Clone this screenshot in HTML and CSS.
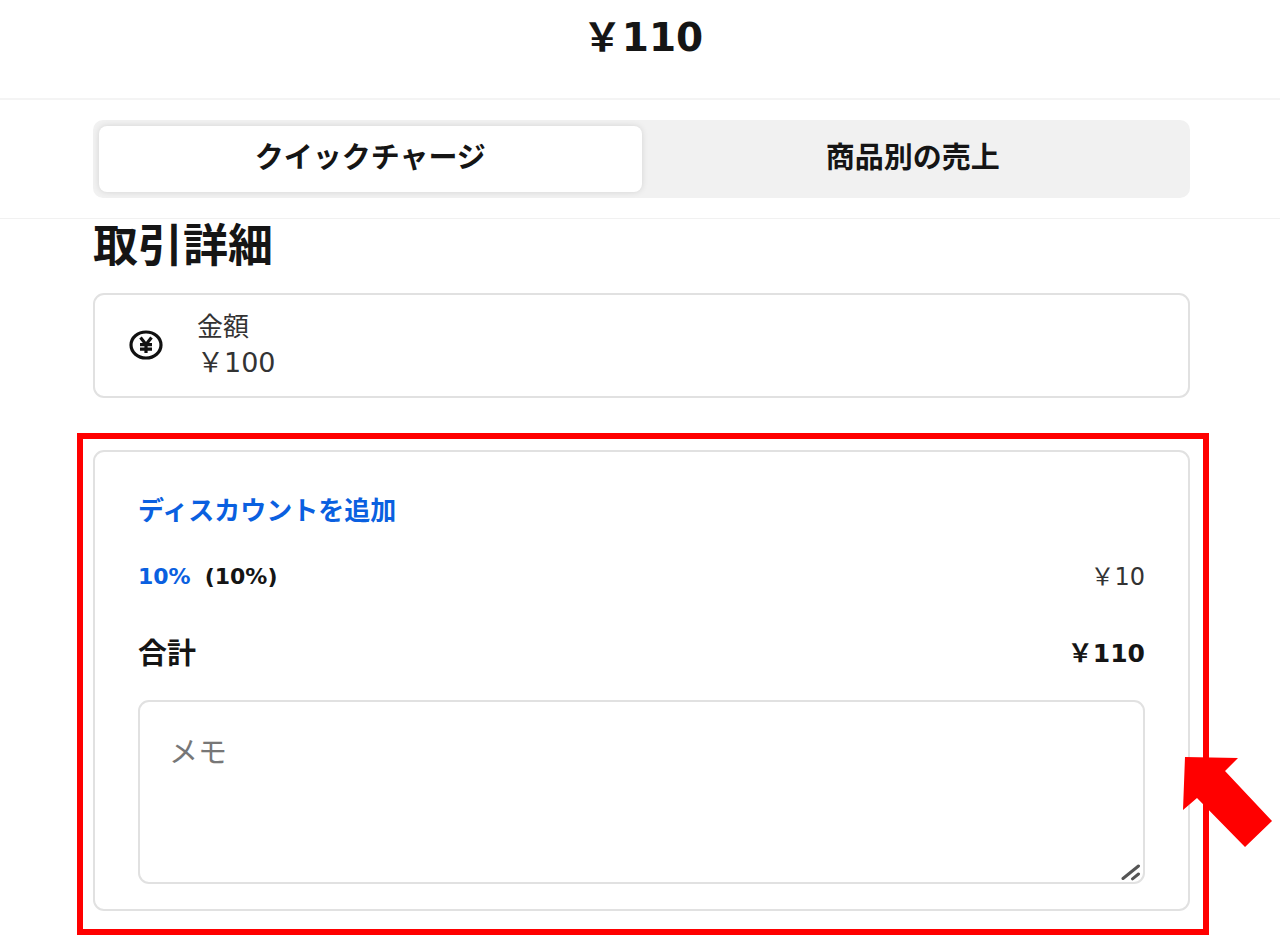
FILE: index.html
```
<!DOCTYPE html>
<html lang="ja">
  <head>
    <meta charset="UTF-8" />
    <meta name="viewport" content="width=device-width, initial-scale=1.0" />
    <title>クイックチャージ</title>

    <link rel="stylesheet" href="styles.css">
  </head>
  <body>
    <header class="charge-header">
      <h1>￥110</h1>
    </header>

    <nav class="tab-bar">
      <div class="tabs">
        <button type="button" class="tab active">クイックチャージ</button>
        <button type="button" class="tab">商品別の売上</button>
      </div>
    </nav>

    <main class="content">
      <h2>取引詳細</h2>

      <div class="card amount-card">
        <svg class="yen-icon" width="34" height="30" viewBox="0 0 34 30">
          <ellipse cx="17" cy="15" rx="15" ry="13" fill="none" stroke="#111" stroke-width="3.2" />
          <path
            d="M11.5 7.5L17 14.5L22.5 7.5M17 13V23M11 14.6H23M11 19.2H23"
            fill="none"
            stroke="#111"
            stroke-width="3.2"
          />
        </svg>
        <div class="amount-text">
          <div>金額</div>
          <div class="amount-value">￥100</div>
        </div>
      </div>

      <section class="highlight">
        <div class="card summary-card">
          <a class="add-discount" href="#">ディスカウントを追加</a>

          <div class="row discount-row">
            <div class="discount-name"><a href="#">10%</a><span>(10%)</span></div>
            <span class="discount-value">￥10</span>
          </div>

          <div class="row total-row">
            <span>合計</span>
            <span class="total-value">￥110</span>
          </div>

          <div class="memo">
            <textarea placeholder="メモ" aria-label="メモ"></textarea>
            <svg class="grip" width="20" height="18" viewBox="0 0 20 18">
              <path
                d="M2 15.5L17.5 3M11.5 15.8L17.5 11"
                fill="none"
                stroke="#555"
                stroke-width="3"
                stroke-linecap="round"
              />
            </svg>
          </div>
        </div>

        <svg class="arrow" width="90" height="92" viewBox="0 0 90 92">
          <polygon points="2,1 55,2 42,15 89,65 62,91 14,42 0,54" fill="#f00" />
        </svg>
      </section>
    </main>
  </body>
</html>
```
FILE: styles.css
```
* {
  box-sizing: border-box;
}

body {
  font-family: "DejaVu Sans", "Noto Sans CJK JP", sans-serif;
  margin: 0;
  background-color: #fff;
  color: #151515;
}

h1,
h2 {
  margin: 0;
  line-height: 52px;
}

a {
  color: #0a60e0;
  font-weight: bold;
  text-decoration: none;
}

/* Header */
.charge-header {
  padding: 12px 0 34px 6px;
  border-bottom: 2px solid #f4f4f4;
  text-align: center;
}

.charge-header h1 {
  font-size: 39px;
}

/* Tabs */
.tab-bar {
  padding: 20px 90px 20px 93px;
  border-bottom: 1px solid #f1f1f1;
}

.tabs {
  display: flex;
  padding: 6px;
  background-color: #f1f1f1;
  border-radius: 10px;
}

.tab {
  flex: 1;
  padding: 13px 0 15px;
  border: none;
  border-radius: 8px;
  background: none;
  color: inherit;
  font-family: inherit;
  font-size: 29px;
  font-weight: bold;
  line-height: 38px;
  cursor: pointer;
}

.tab.active {
  background-color: #fff;
  box-shadow: 0 0 6px rgba(0, 0, 0, 0.12);
}

/* Content */
.content {
  padding: 2px 90px 0 93px;
}

.content h2 {
  margin-bottom: 20px;
  font-size: 45px;
}

.card {
  border: 2px solid #e1e1e1;
  border-radius: 11px;
  background-color: #fff;
}

.amount-card {
  display: flex;
  align-items: center;
  gap: 34px;
  padding: 14px 34px 15px;
  margin-bottom: 35px;
}

.amount-text {
  color: #333;
  font-size: 26px;
  line-height: 36px;
}

.amount-value {
  font-size: 27px;
}

/* Highlighted summary */
.highlight {
  position: relative;
  margin: 0 -19px 0 -16px;
  padding: 11px 13px 18px 10px;
  border: 6px solid #f00;
}

.summary-card {
  padding: 42px 43px 25px;
}

.add-discount {
  display: block;
  font-size: 26px;
  line-height: 34px;
}

.row {
  display: flex;
  justify-content: space-between;
}

.discount-row {
  margin-top: 32px;
  font-size: 22px;
  line-height: 34px;
}

.discount-name {
  display: flex;
  gap: 14px;
  font-weight: bold;
}

.discount-value {
  color: #333;
  font-size: 24px;
}

.total-row {
  margin: 41px 0 27px;
  font-size: 29px;
  font-weight: bold;
  line-height: 38px;
}

.total-value {
  font-size: 25px;
}

.memo {
  position: relative;
}

.memo textarea {
  display: block;
  width: 100%;
  height: 184px;
  padding: 32px 29px;
  border: 2px solid #e1e1e1;
  border-radius: 11px;
  font-family: inherit;
  font-size: 29px;
  line-height: 38px;
  resize: none;
}

.memo textarea::placeholder {
  color: #777;
}

.grip {
  position: absolute;
  right: 4px;
  bottom: 3px;
}

.arrow {
  position: absolute;
  top: 317px;
  right: -70px;
}
```
